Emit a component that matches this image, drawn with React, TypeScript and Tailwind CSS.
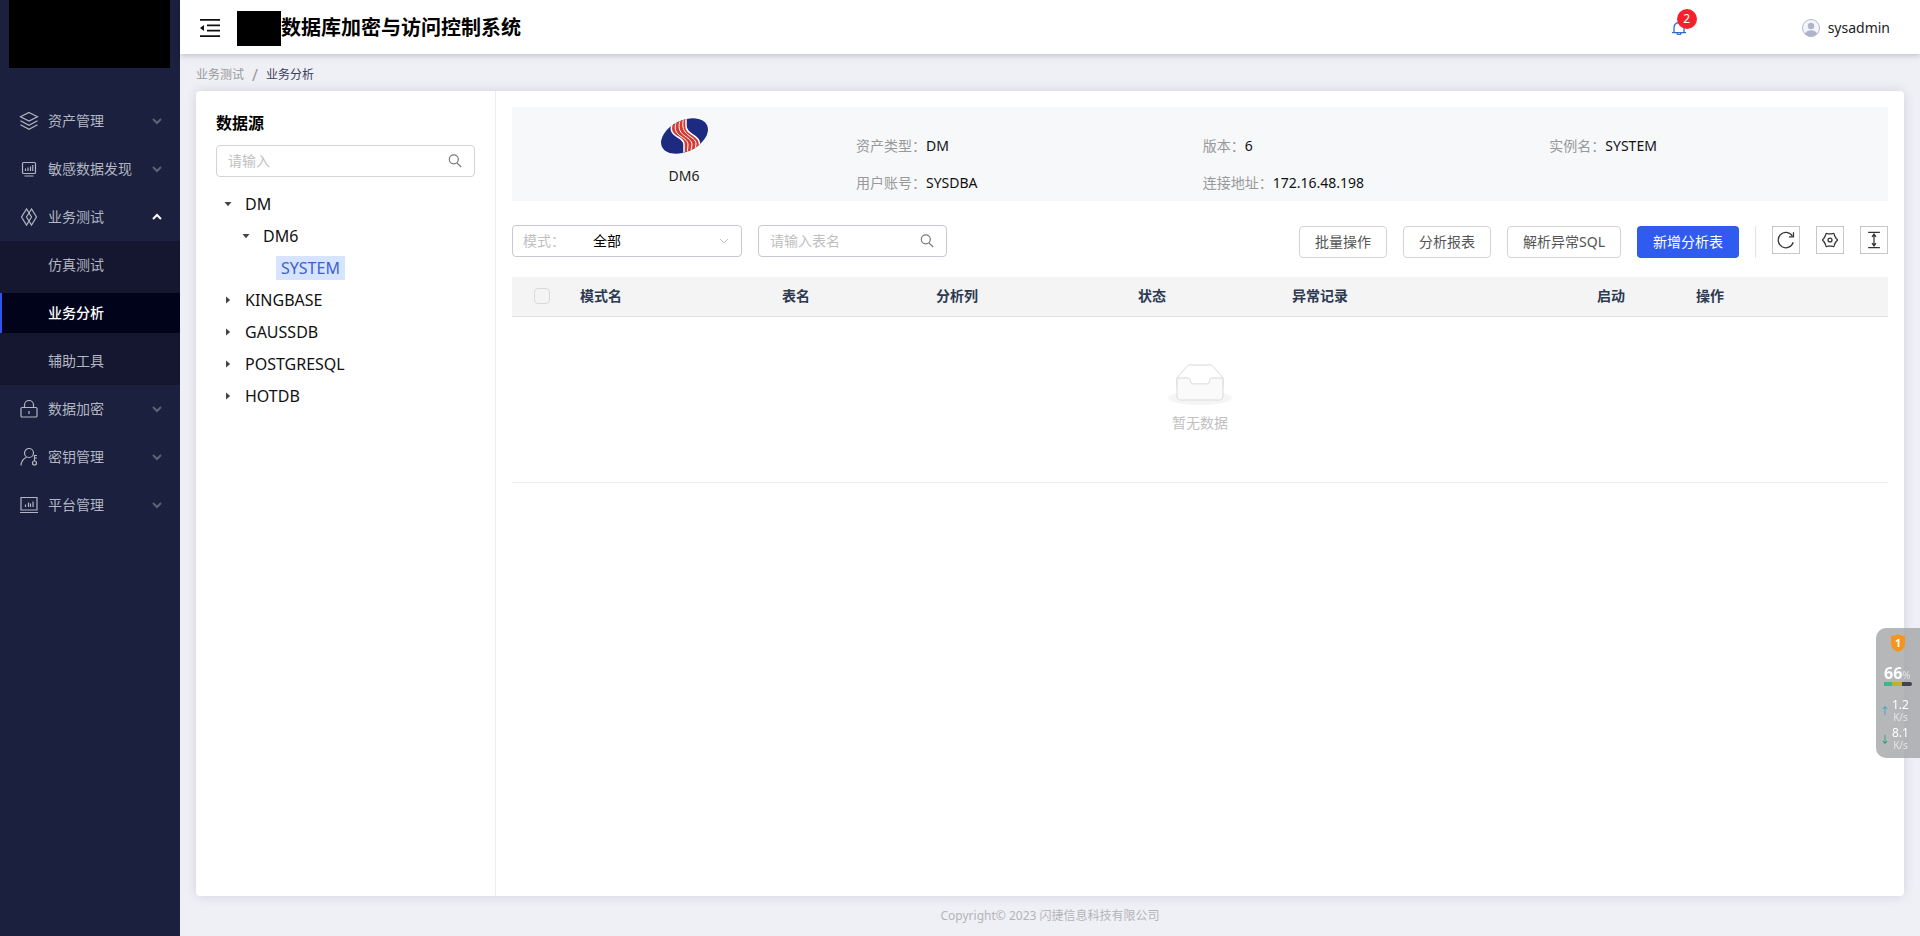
import { clsx } from 'clsx';
import { ReactNode, useState } from 'react';

interface MenuItem {
	key: string;
	title: string;
	icon: ReactNode;
	children?: string[];
}

interface TreeNode {
	title: string;
	level: number;
	state: 'open' | 'closed' | 'leaf';
}

const MenuIcon = ({ children }: { children: ReactNode }) => (
	<svg className="size-5" viewBox="0 0 20 20" fill="none" stroke="currentColor" strokeWidth="1.2">
		{children}
	</svg>
);

const ChevronIcon = ({ className }: { className?: string }) => (
	<svg className={className} viewBox="0 0 12 12" fill="none" stroke="currentColor">
		<path d="m2 4 4 4 4-4" />
	</svg>
);

const SearchIcon = () => (
	<svg className="size-4" viewBox="0 0 16 16" fill="none" stroke="currentColor" strokeWidth="1.2">
		<circle cx="6.8" cy="6.3" r="4.5" />
		<path d="m10 9.8 4.2 4.2" />
	</svg>
);

const MENU: MenuItem[] = [
	{
		key: 'asset',
		title: '资产管理',
		icon: (
			<MenuIcon>
				<path d="m10 1.5 8.500 4.300-8.500 4.200-8.500-4.200z" />
				<path d="m1.500 9.800 8.500 4.400 8.500-4.400M1.500 13.800l8.500 4.400 8.500-4.400" />
			</MenuIcon>
		)
	},
	{
		key: 'discover',
		title: '敏感数据发现',
		icon: (
			<MenuIcon>
				<rect x="3.5" y="3.500" width="13" height="11" rx="1" />
				<path d="M6.500 9.500V12M9 8.500V12M11.500 7.500V12M13.800 6V12M5.500 17h9" />
			</MenuIcon>
		)
	},
	{
		key: 'test',
		title: '业务测试',
		icon: (
			<MenuIcon>
				<path d="m7.500 2-5 8 5 8 5-8zM12.500 2l-5 8 5 8 5-8z" />
			</MenuIcon>
		),
		children: ['仿真测试', '业务分析', '辅助工具']
	},
	{
		key: 'encrypt',
		title: '数据加密',
		icon: (
			<MenuIcon>
				<rect x="2" y="8.500" width="16" height="9.500" rx="1" />
				<path d="M5.500 8.500V6a4.500 4.500 0 0 1 9 0v2.500M10 12v3" />
			</MenuIcon>
		)
	},
	{
		key: 'secret',
		title: '密钥管理',
		icon: (
			<MenuIcon>
				<circle cx="10" cy="6" r="4.500" />
				<path d="M2 18.500c.3-4.500 2.300-7 5.500-8.300" />
				<circle cx="15.500" cy="16" r="2" />
				<path d="M15.500 14V8.500H18M15.500 11H18" />
			</MenuIcon>
		)
	},
	{
		key: 'platform',
		title: '平台管理',
		icon: (
			<MenuIcon>
				<path d="M2 2.500h16v12.500H2zM1 17.500h18" />
				<path d="M6.500 9.500V12M9.500 7.500V12M11.500 8.500V12M14 6.500V12" />
			</MenuIcon>
		)
	}
];

const TREE: TreeNode[] = [
	{ title: 'DM', level: 0, state: 'open' },
	{ title: 'DM6', level: 1, state: 'open' },
	{ title: 'SYSTEM', level: 2, state: 'leaf' },
	{ title: 'KINGBASE', level: 0, state: 'closed' },
	{ title: 'GAUSSDB', level: 0, state: 'closed' },
	{ title: 'POSTGRESQL', level: 0, state: 'closed' },
	{ title: 'HOTDB', level: 0, state: 'closed' }
];

const INFO = [
	{ label: '资产类型', value: 'DM' },
	{ label: '版本', value: '6' },
	{ label: '实例名', value: 'SYSTEM' },
	{ label: '用户账号', value: 'SYSDBA' },
	{ label: '连接地址', value: '172.16.48.198' }
];

const COLUMNS = [
	{ title: '模式名', width: 'w-[202px]' },
	{ title: '表名', width: 'w-[154px]' },
	{ title: '分析列', width: 'w-[202px]' },
	{ title: '状态', width: 'w-[154px]' },
	{ title: '异常记录', width: 'w-[305px]' },
	{ title: '启动', width: 'w-[99px]' },
	{ title: '操作', width: '' }
];

const Sidebar = () => {
	const [openKey, setOpenKey] = useState('test');

	return (
		<aside className="flex w-[180px] shrink-0 flex-col bg-[#1a203d] text-sm text-[#b3b6c2]">
			<div className="mr-[10px] ml-[9px] h-[68px] bg-black" />
			<nav className="mt-[29px]">
				{MENU.map((item) => {
					const isOpen = item.key === openKey && Boolean(item.children);

					return (
						<div key={item.key}>
							<button
								type="button"
								className="flex h-12 w-full items-center pr-[17px] pl-[19px]"
								aria-expanded={isOpen}
								onClick={() => setOpenKey(isOpen ? '' : item.key)}
							>
								{item.icon}
								<span className="ml-[9px] flex-1 text-left">{item.title}</span>
								<ChevronIcon
									className={clsx(
										'size-3 stroke-2',
										isOpen ? 'rotate-180 text-white' : 'text-[#5d6278]'
									)}
								/>
							</button>
							{isOpen && (
								<div className="flex flex-col gap-2 bg-[#14172f] py-1">
									{item.children?.map((child) => (
										<a
											key={child}
											href="#"
											className={clsx(
												'flex h-10 items-center border-l-2 pl-[46px]',
												child === '业务分析'
													? 'border-[#2f54eb] bg-[#01031b] font-medium text-white'
													: 'border-transparent'
											)}
										>
											{child}
										</a>
									))}
								</div>
							)}
						</div>
					);
				})}
			</nav>
		</aside>
	);
};

const Header = () => (
	<header className="z-10 flex h-[54px] items-center bg-white pt-0.5 pr-[30px] pl-5 shadow-[0_1px_6px_rgba(0,10,50,0.25)]">
		<button type="button" aria-label="收起菜单">
			<svg className="size-5" viewBox="0 0 20 20" fill="none" stroke="#111" strokeWidth="1.8">
				<path d="M0 1.900h20M7 7.300h13M7 12.700h13M0 18.100h20" />
				<path d="M4 7v6l-4-3z" fill="#111" stroke="none" />
			</svg>
		</button>
		<div className="ml-[17px] h-[35px] w-11 bg-black" />
		<h1 className="text-xl font-bold text-black">数据库加密与访问控制系统</h1>
		<button type="button" className="relative ml-auto" aria-label="消息">
			<svg className="size-[14px]" viewBox="0 0 14 14" fill="none" stroke="#2f6bd0" strokeWidth="1.3">
				<path d="M0 11.700h14M2 11.700V6.500a5 5 0 0 1 10 0v5.200M5 12a2 1.600 0 0 0 4 0" />
			</svg>
			<span className="absolute -top-3 left-[5px] flex size-5 items-center justify-center rounded-full bg-[#f5222d] text-xs text-white">
				2
			</span>
		</button>
		<div className="ml-[116px] flex items-center gap-2 text-sm text-[#222]">
			<svg className="size-[18px]" viewBox="0 0 18 18">
				<circle cx="9" cy="9" r="8.5" fill="#f4f5fa" stroke="#b4b8ca" />
				<circle cx="9" cy="7" r="3.2" fill="#b0b4c8" />
				<path d="M3 15c1-5 11-5 12 0-3 3.400-9 3.400-12 0z" fill="#b0b4c8" />
			</svg>
			sysadmin
		</div>
	</header>
);

const SourceTree = () => (
	<section className="w-[300px] shrink-0 border-r border-[#ececec] px-5 pt-5">
		<h2 className="text-base font-bold text-black">数据源</h2>
		<label className="mt-[10px] flex h-8 items-center rounded border border-[#d4d4d8] px-[11px] text-[#777]">
			<input
				className="min-w-0 flex-1 text-sm outline-none placeholder:text-[#bfbfbf]"
				placeholder="请输入"
				aria-label="数据源搜索"
			/>
			<SearchIcon />
		</label>
		<ul className="mt-[11px] text-base text-[#111]">
			{TREE.map((node) => (
				<li
					key={node.title}
					className={clsx(
						'flex h-8 items-center',
						node.level === 1 && 'pl-[18px]',
						node.level === 2 && 'pl-9'
					)}
				>
					<span className="flex w-6 justify-center">
						{node.state !== 'leaf' && (
							<svg
								className={clsx('size-2', node.state === 'closed' && '-rotate-90')}
								viewBox="0 0 8 8"
								fill="#444"
							>
								<path d="M.5 2h7L4 6.200z" />
							</svg>
						)}
					</span>
					<span
						className={clsx(
							'px-[5px] leading-6',
							node.state === 'leaf' && 'bg-[#d6e4ff] text-[#3f5fd0]'
						)}
					>
						{node.title}
					</span>
				</li>
			))}
		</ul>
	</section>
);

const DatabaseLogo = () => (
	<svg className="h-9 w-[47px]" viewBox="0 0 47 36">
		<defs>
			<clipPath id="logo-shape">
				<ellipse cx="23.5" cy="18" rx="25" ry="15.5" transform="rotate(-26 23.5 18)" />
			</clipPath>
		</defs>
		<g clipPath="url(#logo-shape)">
			<rect width="47" height="36" fill="#1c2b80" />
			<path
				d="M14 0C2 20 23 17 23 26V38L37 34C44 15 25 19 25 8V-2Z"
				fill="#d23a34"
				stroke="#fff"
				strokeWidth="1.5"
			/>
			<path
				d="M17 0C7 20 27 17 27 27L26 38M20 0C12 19 31 17 31 27L29 38M23-1C17 19 35 17 35 26L33 38"
				fill="none"
				stroke="#fff"
			/>
		</g>
	</svg>
);

const InfoPanel = () => (
	<div className="flex bg-[#f7f8fa]">
		<div className="flex w-1/4 flex-col items-center pt-[11px] pb-[15px] text-sm text-[#222]">
			<DatabaseLogo />
			<span className="mt-3 leading-5">DM6</span>
		</div>
		<dl className="grid flex-1 grid-cols-3 content-start gap-x-2 gap-y-[17px] pt-[29px] text-sm leading-5">
			{INFO.map((item) => (
				<div key={item.label} className="flex">
					<dt className="text-[#999]">{item.label}：</dt>
					<dd className="text-[#111]">{item.value}</dd>
				</div>
			))}
		</dl>
	</div>
);

const ToolButton = ({ label, children }: { label: string; children: ReactNode }) => (
	<button
		type="button"
		aria-label={label}
		className="flex size-7 items-center justify-center border border-[#c8c8cc] text-[#333]"
	>
		<svg className="size-[18px]" viewBox="0 0 20 20" fill="none" stroke="currentColor" strokeWidth="1.4">
			{children}
		</svg>
	</button>
);

const Toolbar = () => (
	<div className="mt-6 flex items-start gap-4 text-sm">
		<label className="relative flex h-8 w-[230px] items-center rounded border border-[#c8c8d0] text-[#bfbfbf]">
			<span className="w-20 pl-[10px]">模式：</span>
			<select className="h-full flex-1 appearance-none text-black outline-none">
				<option>全部</option>
			</select>
			<ChevronIcon className="pointer-events-none absolute right-[11px] size-3" />
		</label>
		<label className="flex h-8 w-[189px] items-center rounded border border-[#c8c8d0] px-[11px] text-[#777]">
			<input
				className="min-w-0 flex-1 outline-none placeholder:text-[#bfbfbf]"
				placeholder="请输入表名"
				aria-label="表名"
			/>
			<SearchIcon />
		</label>
		<div className="ml-auto flex gap-4 pt-px">
			{['批量操作', '分析报表', '解析异常SQL'].map((title) => (
				<button
					key={title}
					type="button"
					className="h-8 rounded border border-[#d4d4d4] px-[15px] text-[#555]"
				>
					{title}
				</button>
			))}
			<button type="button" className="h-8 rounded bg-[#2f5bf0] px-4 text-white">
				新增分析表
			</button>
			<div className="h-8 w-px bg-[#e4e4e4]" />
			<ToolButton label="刷新">
				<path d="M18 12.500A8.500 8.500 0 1 1 17 5.500M18.300 1.500v5h-5" />
			</ToolButton>
			<ToolButton label="设置">
				<path d="M17.100 8.600Q19.500 10 17.100 11.400Q15.600 13.300 14.800 15.500Q14.800 18.200 12.400 16.900Q10 16.500 7.600 16.900Q5.200 18.200 5.200 15.500Q4.400 13.300 2.900 11.400Q.5 10 2.900 8.600Q4.400 6.700 5.200 4.500Q5.200 1.800 7.600 3.100Q10 3.500 12.400 3.100Q14.800 1.800 14.800 4.500Q15.600 6.700 17.100 8.600z" />
				<circle cx="10" cy="10" r="2.2" />
			</ToolButton>
			<ToolButton label="密度">
				<path d="M3.500 1.500h13M3.500 18.500h13M10 4v12M7.800 6.500l2.200-3 2.200 3M7.800 13.500l2.200 3 2.200-3" />
			</ToolButton>
		</div>
	</div>
);

const EmptyIcon = () => (
	<svg className="h-[41px] w-16" viewBox="0 0 64 41" fill="none">
		<g transform="translate(0 1)">
			<ellipse fill="#f5f5f5" cx="32" cy="33" rx="32" ry="7" />
			<g stroke="#d9d9d9">
				<path
					fill="#fff"
					d="M55 12.760L44.854 1.258C44.367.474 43.656 0 42.907 0H21.093c-.749 0-1.460.474-1.947 1.257L9 12.761V22h46v-9.240z"
				/>
				<path
					fill="#fafafa"
					d="M41.613 15.931c0-1.605.994-2.930 2.227-2.931H55v18.137C55 33.260 53.680 35 52.050 35h-40.100C10.320 35 9 33.259 9 31.137V13h11.160c1.233 0 2.227 1.323 2.227 2.928v.022c0 1.605 1.005 2.901 2.237 2.901h14.752c1.232 0 2.237-1.308 2.237-2.913v-.007z"
				/>
			</g>
		</g>
	</svg>
);

const DataTable = () => (
	<table className="mt-[19px] w-full table-fixed text-sm">
		<thead className="border-b border-[#dfe1e3] bg-[#f4f4f4] text-[#2d3a52]">
			<tr className="h-[39px]">
				<th className="w-[60px]">
					<input
						type="checkbox"
						aria-label="全选"
						className="ml-[22px] block size-4 appearance-none rounded-sm border border-[#d9d9d9]"
					/>
				</th>
				{COLUMNS.map((column) => (
					<th
						key={column.title}
						className={clsx('px-2 text-left font-bold', column.width)}
					>
						{column.title}
					</th>
				))}
			</tr>
		</thead>
		<tbody>
			<tr className="border-b border-[#ececec]">
				<td colSpan={8} className="pt-[47px] pb-12 text-[#bfbfbf]">
					<div className="flex flex-col items-center gap-[7px]">
						<EmptyIcon />
						<span className="leading-[22px]">暂无数据</span>
					</div>
				</td>
			</tr>
		</tbody>
	</table>
);

const Speed = ({ arrow, value, color }: { arrow: string; value: string; color: string }) => (
	<div className="flex items-center gap-1">
		<span className={clsx('w-2 text-[10px]', color)}>{arrow}</span>
		<span className="text-center text-xs leading-3">
			{value}
			<span className="block text-[10px] leading-3 text-[#e4e4e4]">K/s</span>
		</span>
	</div>
);

const SpeedWidget = () => (
	<aside className="fixed top-[628px] right-0 z-20 flex h-[130px] w-11 flex-col rounded-l-[10px] bg-[#a3a5a8]/80 text-white">
		<svg className="mt-1.5 ml-[14px] h-[18px] w-4" viewBox="0 0 16 18">
			<path d="M8 0q3 2 7 2v8q0 5-7 8-7-3-7-8V2q4 0 7-2z" fill="#f7941d" />
			<text x="8" y="13" textAnchor="middle" fontSize="11" fontWeight="700" fill="#fff">
				1
			</text>
		</svg>
		<div className="mt-3 ml-2 flex items-baseline leading-[18px]">
			<b className="text-base leading-[18px]">66</b>
			<span className="text-[10px] leading-3 text-[#e4e4e4]">%</span>
		</div>
		<div className="ml-2 flex h-1 w-7 overflow-hidden rounded-full bg-[#444450]">
			<span className="w-2 bg-[#3ab98c]" />
			<span className="w-[10px] bg-[#b9b429]" />
		</div>
		<div className="mt-[13px] ml-1 flex flex-col gap-1">
			<Speed arrow="↑" value="1.2" color="text-[#25a5c8]" />
			<Speed arrow="↓" value="8.1" color="text-[#169b6b]" />
		</div>
	</aside>
);

export default function App() {
	return (
		<div className="flex min-h-screen bg-[#eff0f5] font-['Noto_Sans','Noto_Sans_CJK_SC',sans-serif]">
			<Sidebar />
			<div className="flex min-w-0 flex-1 flex-col">
				<Header />
				<nav className="flex h-[37px] items-center gap-2 px-4 pt-1 text-xs text-[#999]">
					<a href="#">业务测试</a>
					<span className="text-base">/</span>
					<span className="text-[#3b3f5c]">业务分析</span>
				</nav>
				<main className="mx-4 flex flex-1 rounded bg-white shadow-[0_0_12px_rgba(0,0,50,0.12)]">
					<SourceTree />
					<section className="min-w-0 flex-1 p-4">
						<InfoPanel />
						<Toolbar />
						<DataTable />
					</section>
				</main>
				<footer className="flex h-10 items-center justify-center text-xs text-[#b4b4b8]">
					Copyright© 2023 闪捷信息科技有限公司
				</footer>
			</div>
			<SpeedWidget />
		</div>
	);
}
